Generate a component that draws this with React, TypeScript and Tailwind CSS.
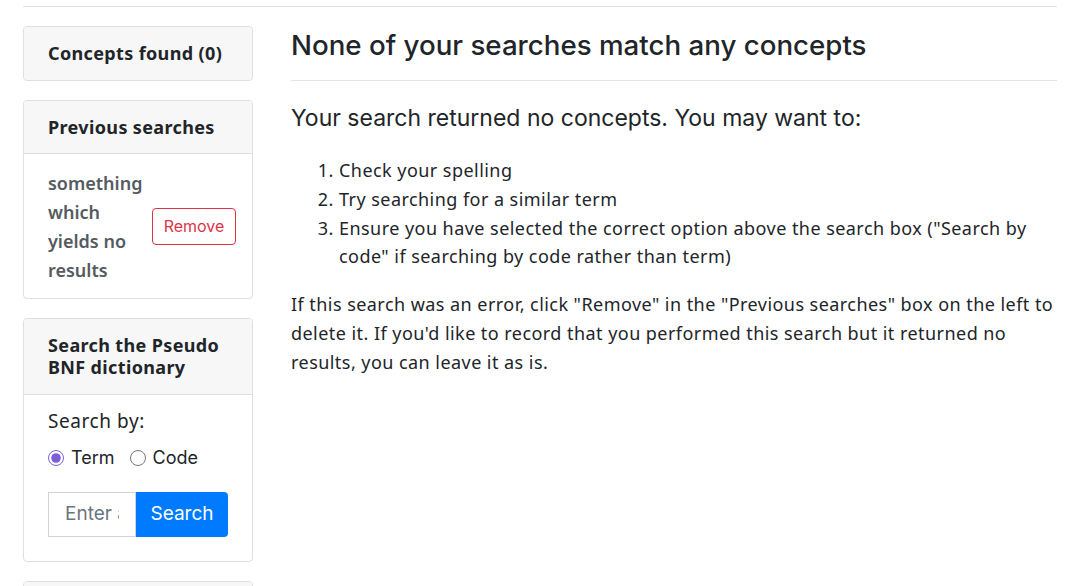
import React, { useState } from "react";

const body = "font-['Noto_Sans',sans-serif]";
const ui = "font-['Inter',sans-serif]";

function Card({
  title,
  children,
}: {
  title: React.ReactNode;
  children?: React.ReactNode;
}) {
  return (
    <div className="rounded-[4px] border border-[#dfdfdf] bg-white overflow-hidden">
      <div
        className={`bg-[#f7f7f7] px-6 pt-[16px] pb-[15px] text-[18px] font-bold leading-[1.2] tracking-[0.02em] text-[#212529] ${
          children ? "border-b border-[#dfdfdf]" : "shadow-[0_1px_0_#d6d6d6]"
        }`}
      >
        {title}
      </div>
      {children}
    </div>
  );
}

export default function App() {
  const [searchBy, setSearchBy] = useState("term");

  return (
    <div className={`${body} min-h-screen bg-white text-[#212529] text-[18px] leading-[1.6]`}>
      <div className="mx-[23px] mt-[6px] border-t border-[#e3e3e3] flex gap-[38px] pt-[19px]">
        {/* Sidebar */}
        <aside className="w-[230px] shrink-0 flex flex-col gap-[19px]">
          <Card title="Concepts found (0)" />

          <Card title="Previous searches">
            <div className="flex items-center justify-between pl-6 pr-4 pt-[15px] pb-[14px]">
              <div className="font-semibold text-[#555b61]">
                something
                <br />
                which
                <br />
                yields no
                <br />
                results
              </div>
              <button
                className={`${ui} h-[37px] w-[84px] rounded-[4px] border border-[#dc3545] text-[16px] text-[#dc3545]`}
              >
                Remove
              </button>
            </div>
          </Card>

          <Card
            title={
              <>
                Search the Pseudo
                <br />
                BNF dictionary
              </>
            }
          >
            <div className="px-6 pt-[12px] pb-6">
              <div className="text-[19px] tracking-[0.03em] leading-[1.55]">Search by:</div>
              <div className={`${ui} flex items-center gap-[15px] mt-[11px] leading-[1.2]`}>
                <label className="flex items-center gap-[7px]">
                  <input
                    type="radio"
                    name="searchBy"
                    checked={searchBy === "term"}
                    onChange={() => setSearchBy("term")}
                    className="w-4 h-4 m-0 accent-[#7b5fd8]"
                  />
                  Term
                </label>
                <label className="flex items-center gap-[7px]">
                  <input
                    type="radio"
                    name="searchBy"
                    checked={searchBy === "code"}
                    onChange={() => setSearchBy("code")}
                    className="w-4 h-4 m-0 accent-[#7b5fd8]"
                  />
                  Code
                </label>
              </div>
              <div className="flex mt-[23px] h-[45px]">
                <input
                  type="text"
                  placeholder="Enter a search term"
                  className={`${ui} w-[88px] border border-[#ced4da] px-4 text-[19px] text-[#495057] placeholder:text-[#6c757d] outline-none`}
                />
                <button
                  className={`${ui} w-[93px] rounded-r-[4px] bg-[#007bff] text-[19px] text-white`}
                >
                  Search
                </button>
              </div>
            </div>
          </Card>

          <Card title="&nbsp;">
            <div className="h-10" />
          </Card>
        </aside>

        {/* Main */}
        <main className="flex-1 min-w-0 pt-[3px] tracking-[0.025em]">
          <h2 className={`${ui} text-[27.7px] font-medium leading-[1.2] tracking-normal`}>
            None of your searches match any concepts
          </h2>
          <hr className="mt-[18px] mb-[23px] border-t border-[#e3e3e3]" />
          <h4 className={`${ui} text-[23px] leading-[1.25] tracking-normal`}>
            Your search returned no concepts. You may want to:
          </h4>
          <ol className="list-decimal pl-[48px] mt-[23px]">
            <li>Check your spelling</li>
            <li>Try searching for a similar term</li>
            <li>
              Ensure you have selected the correct option above the search box
              ("Search by code" if searching by code rather than term)
            </li>
          </ol>
          <p className="mt-[19px]">
            If this search was an error, click "Remove" in the "Previous
            searches" box on the left to delete it. If you'd like to record that
            you performed this search but it returned no results, you can leave
            it as is.
          </p>
        </main>
      </div>
    </div>
  );
}
